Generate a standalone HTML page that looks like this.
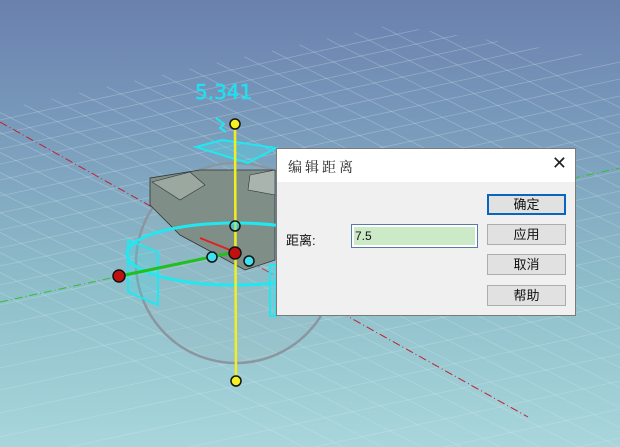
<!DOCTYPE html>
<html><head><meta charset="utf-8"><style>
html,body{margin:0;padding:0;width:620px;height:447px;overflow:hidden;font-family:"Liberation Sans","Noto Sans CJK SC",sans-serif}
#v{position:absolute;left:0;top:0;display:block}
.dlg{position:absolute;left:276px;top:148px;width:300px;height:168px;background:#f0f0f0;border:1px solid #7a7a7a;box-sizing:border-box}
.tb{height:33px;background:#fff;position:relative}
.tt{position:absolute;left:11px;top:8px;font-size:14px;letter-spacing:3px;color:#222;font-family:"Noto Serif CJK SC",serif}
.x{position:absolute;right:8px;top:4px;font-size:18px;color:#222}
.btn{position:absolute;left:210px;width:79px;height:21px;background:#e1e1e1;border:1px solid #adadad;box-sizing:border-box;font-size:13px;text-align:center;line-height:19px;color:#111}
.lab{position:absolute;left:9px;top:81px;font-size:13px;color:#111}
.in{position:absolute;left:74px;top:75px;width:127px;height:24px;border:1px solid #5a7aa8;box-sizing:border-box;background:#fff;padding:2px}
.in div{background:#cdeac8;height:18px;font-size:12px;line-height:18px;padding-left:1px;color:#111}
</style></head><body>
<svg id="v" width="620" height="447" viewBox="0 0 620 447">
<defs>
<linearGradient id="bg" x1="0" y1="0" x2="0" y2="1">
<stop offset="0" stop-color="#6a80ae"/><stop offset="0.3" stop-color="#7a9cbc"/><stop offset="0.65" stop-color="#8fbfca"/><stop offset="1" stop-color="#a8d6dc"/></linearGradient>
<clipPath id="pl"><polygon points="0,110 390,25 620,60 620,447 0,447"/></clipPath>
</defs>
<rect width="620" height="447" fill="url(#bg)"/>
<g clip-path="url(#pl)" stroke="#d6eef2" stroke-opacity="0.3" stroke-width="0.8">
<g>
<line x1="-300" y1="-60" x2="900" y2="550"/><line x1="-300" y1="-40" x2="900" y2="570"/><line x1="-300" y1="-20" x2="900" y2="590"/><line x1="-300" y1="0" x2="900" y2="610"/><line x1="-300" y1="20" x2="900" y2="630"/><line x1="-300" y1="40" x2="900" y2="650"/><line x1="-300" y1="60" x2="900" y2="670"/><line x1="-300" y1="80" x2="900" y2="690"/><line x1="-300" y1="100" x2="900" y2="710"/><line x1="-300" y1="120" x2="900" y2="730"/><line x1="-300" y1="140" x2="900" y2="750"/><line x1="-300" y1="-80" x2="900" y2="530"/><line x1="-300" y1="-100" x2="900" y2="510"/><line x1="-300" y1="-120" x2="900" y2="490"/><line x1="-300" y1="-140" x2="900" y2="470"/><line x1="-300" y1="-160" x2="900" y2="450"/><line x1="-300" y1="-180" x2="900" y2="430"/><line x1="-300" y1="-200" x2="900" y2="410"/><line x1="-300" y1="-220" x2="900" y2="390"/><line x1="-300" y1="-240" x2="900" y2="370"/><line x1="-300" y1="-260" x2="900" y2="350"/><line x1="-300" y1="-280" x2="900" y2="330"/><line x1="-300" y1="-300" x2="900" y2="310"/><line x1="-300" y1="-320" x2="900" y2="290"/><line x1="-300" y1="-340" x2="900" y2="270"/><line x1="-300" y1="-360" x2="900" y2="250"/>
</g>
<g>
<line x1="0" y1="120" x2="620" y2="-14"/><line x1="0" y1="134" x2="620" y2="0"/><line x1="0" y1="149" x2="620" y2="15"/><line x1="0" y1="164" x2="620" y2="30"/><line x1="0" y1="180" x2="620" y2="46"/><line x1="0" y1="196" x2="620" y2="62"/><line x1="0" y1="213" x2="620" y2="79"/><line x1="0" y1="230" x2="620" y2="96"/><line x1="0" y1="248" x2="620" y2="114"/><line x1="0" y1="266" x2="620" y2="132"/><line x1="0" y1="285" x2="620" y2="151"/><line x1="0" y1="305" x2="620" y2="171"/><line x1="0" y1="325" x2="620" y2="191"/><line x1="0" y1="346" x2="620" y2="212"/><line x1="0" y1="368" x2="620" y2="234"/><line x1="0" y1="390" x2="620" y2="256"/><line x1="0" y1="413" x2="620" y2="279"/><line x1="0" y1="437" x2="620" y2="303"/><line x1="0" y1="462" x2="620" y2="328"/><line x1="0" y1="488" x2="620" y2="354"/><line x1="0" y1="515" x2="620" y2="381"/><line x1="0" y1="543" x2="620" y2="409"/><line x1="0" y1="572" x2="620" y2="438"/>
</g>
</g>
<line x1="0" y1="122" x2="528" y2="417" stroke="#c02030" stroke-width="1" stroke-dasharray="8,3,1,3"/>
<line x1="0" y1="302" x2="620" y2="168" stroke="#30c030" stroke-width="1" stroke-dasharray="8,3,1,3"/>
<circle cx="236" cy="263" r="100" fill="#9ab6c0" fill-opacity="0.25" stroke="#8a96a0" stroke-width="2.5"/>
<polygon points="150,205 150,178 200,170 275,170 275,260 245,270 180,235" fill="#7f8f88" stroke="#333" stroke-width="0.8"/>
<polygon points="152,182 190,172 205,185 180,200" fill="#9aa89f" stroke="#333" stroke-width="0.6"/>
<polygon points="250,175 275,170 275,195 248,190" fill="#a8b4ad" stroke="#333" stroke-width="0.6"/>
<ellipse cx="235" cy="254" rx="108" ry="31" fill="none" stroke="#20e8f0" stroke-width="3"/>
<polygon points="128,240 158,252 158,305 128,292" fill="#40e0f0" fill-opacity="0.25" stroke="#20e8f0" stroke-width="2"/>
<polygon points="270,265 276,265 276,316 270,316" fill="#40e0f0" fill-opacity="0.25" stroke="#20e8f0" stroke-width="2"/>
<polygon points="196,147 222,140 276,148 248,163" fill="#40e0f0" fill-opacity="0.3" stroke="#20e8f0" stroke-width="2"/>
<path d="M216,118 l8,6 -4,4 6,4" fill="none" stroke="#20e8f0" stroke-width="2"/>
<line x1="120" y1="276" x2="235" y2="252" stroke="#20c020" stroke-width="3"/>
<line x1="200" y1="238" x2="235" y2="252" stroke="#e02020" stroke-width="2"/>
<line x1="235" y1="124" x2="236" y2="381" stroke="#f0f020" stroke-width="2.5"/>
<circle cx="235" cy="124" r="5" fill="#f5f020" stroke="#111" stroke-width="1.5"/>
<circle cx="236" cy="381" r="5" fill="#f5f020" stroke="#111" stroke-width="1.5"/>
<circle cx="235" cy="226" r="5" fill="#40e0f0" fill-opacity="0.5" stroke="#111" stroke-width="1.5"/>
<circle cx="212" cy="257" r="5" fill="#40e0f0" stroke="#111" stroke-width="1.5"/>
<circle cx="249" cy="261" r="5" fill="#40e0f0" stroke="#111" stroke-width="1.5"/>
<circle cx="235" cy="253" r="6" fill="#c01010" stroke="#111" stroke-width="1.5"/>
<circle cx="119" cy="276" r="6" fill="#c01010" stroke="#111" stroke-width="1.5"/>
<text x="195" y="99" font-family="DejaVu Sans, sans-serif" font-size="20" fill="#20e0f0" stroke="#20e0f0" stroke-width="0.5">5.341</text>
</svg>
<div class="dlg">
<div class="tb"><span class="tt">编辑距离</span><span class="x">✕</span></div>
<div class="btn" style="top:45px;border:2px solid #0a64c0;line-height:17px">确定</div>
<div class="btn" style="top:75px">应用</div>
<div class="btn" style="top:105px">取消</div>
<div class="btn" style="top:136px">帮助</div>
<div class="lab">距离:</div>
<div class="in"><div>7.5</div></div>
</div>
</body></html>
